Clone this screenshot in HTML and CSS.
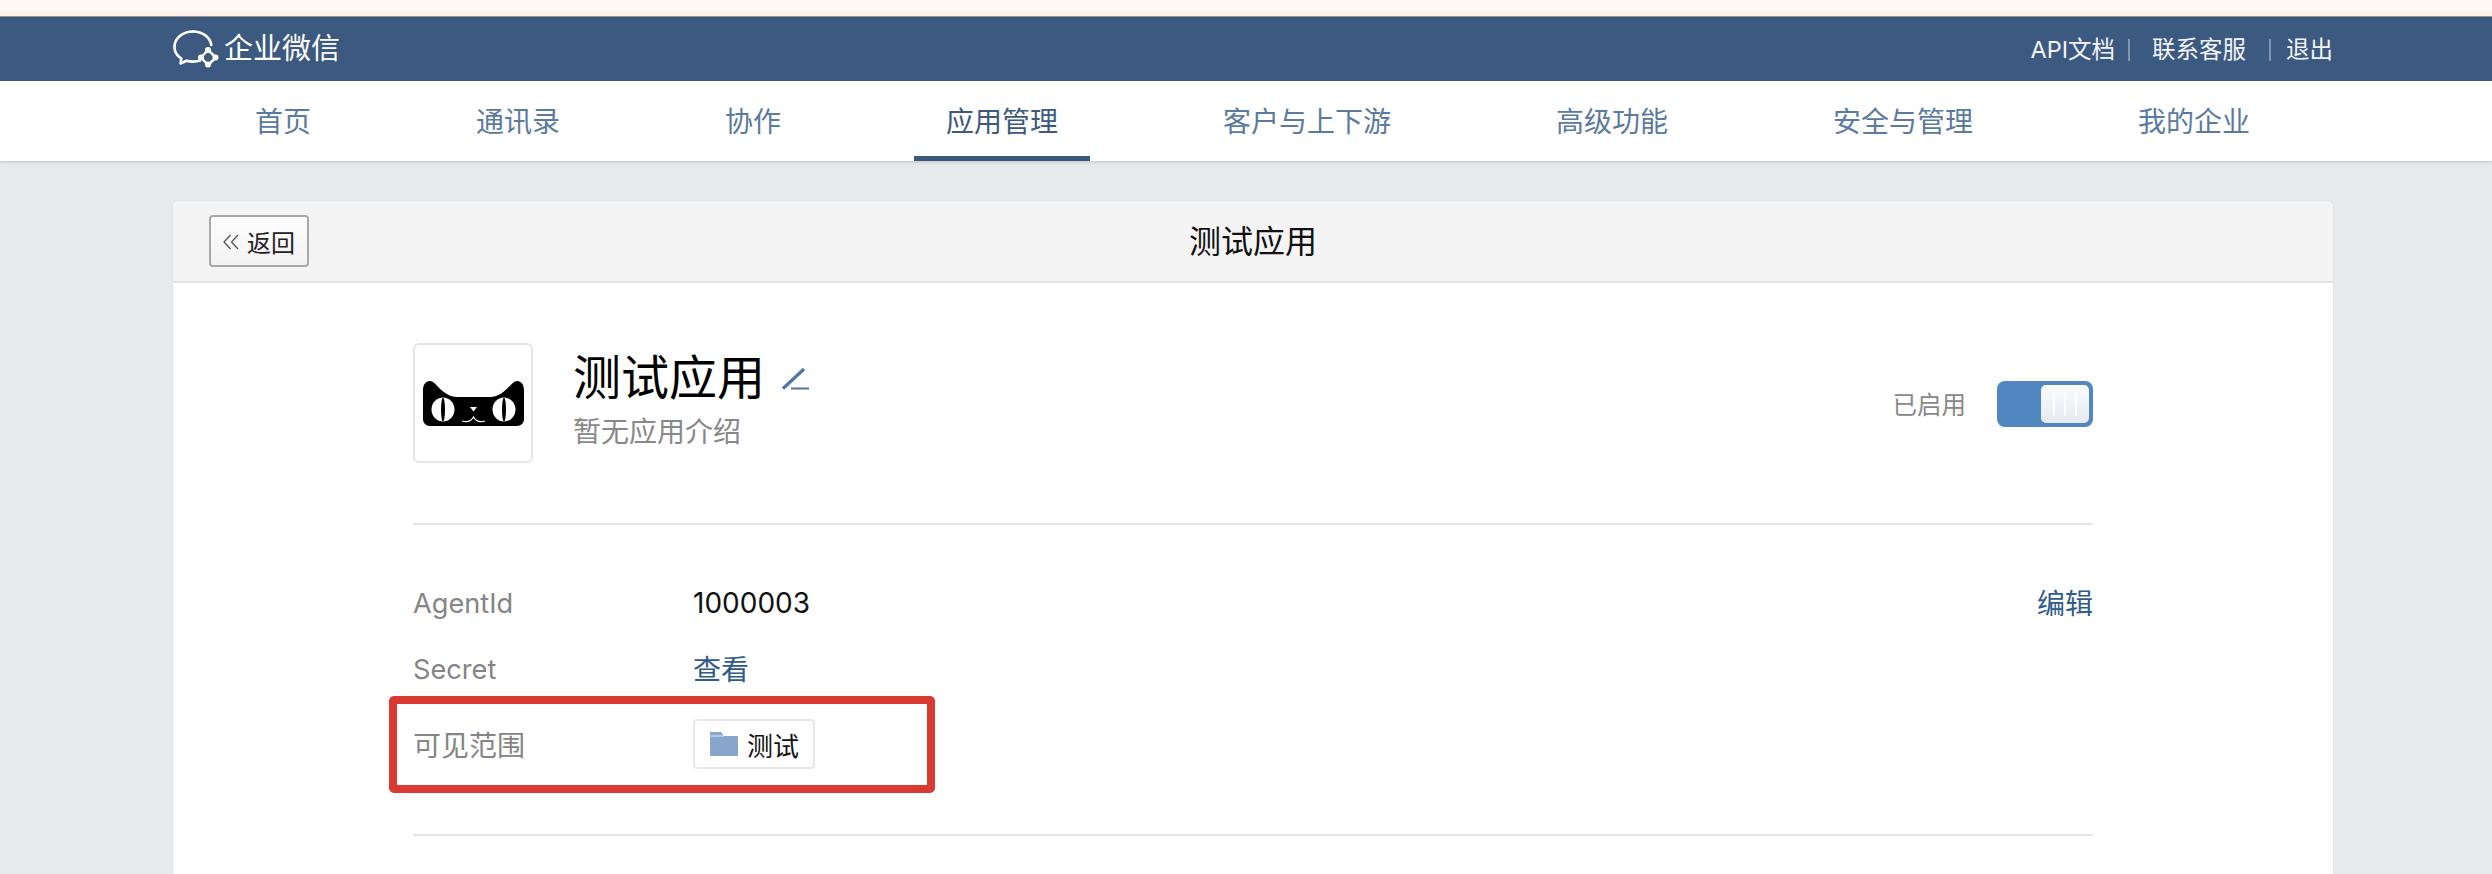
FILE: index.html
```html
<!DOCTYPE html>
<html lang="zh-CN">
<head>
<meta charset="utf-8">
<title>企业微信</title>
<link rel="stylesheet" href="styles.css">
</head>
<body>
<div class="top-strip"></div>
<header class="header">
  <div class="brand">
    <svg class="brand-icon" viewBox="0 0 46 38" fill="none">
      <path d="M20 1.500C9.500 1.500 1.500 8.500 1.500 17c0 4.800 2.600 8.800 6.800 11.500L7.500 33.500l6-2.700c2 .5 4.200.8 6.500.8 2.600 0 5-.3 7-1" stroke="#fff" stroke-width="2.600" stroke-linecap="round" stroke-linejoin="round"/>
      <path d="M20 1.500c9.500 0 17.300 5.800 18.300 13.500" stroke="#fff" stroke-width="2.600" stroke-linecap="round"/>
      <path d="M35 20l8 7.500-8 7.500-7-7.500z" stroke="#fff" stroke-width="2.400" stroke-linejoin="round"/>
      <circle cx="35" cy="20" r="3" fill="#fff"/>
      <circle cx="42.500" cy="27.500" r="3" fill="#fff"/>
      <circle cx="35" cy="34.500" r="3" fill="#fff"/>
      <circle cx="28" cy="27.500" r="3" fill="#fff"/>
    </svg>
    <span class="brand-name">企业微信</span>
  </div>
  <nav class="header-links">
    <a class="header-link">API文档</a>
    <i class="header-sep sep-first"></i>
    <a class="header-link">联系客服</a>
    <i class="header-sep sep-second"></i>
    <a class="header-link">退出</a>
  </nav>
</header>
<nav class="menu">
  <a class="menu-item">首页</a>
  <a class="menu-item">通讯录</a>
  <a class="menu-item">协作</a>
  <a class="menu-item active">应用管理</a>
  <a class="menu-item">客户与上下游</a>
  <a class="menu-item">高级功能</a>
  <a class="menu-item">安全与管理</a>
  <a class="menu-item">我的企业</a>
</nav>
<main class="main">
  <section class="card">
    <div class="card-head">
      <button class="back">
        <svg class="back-icon" viewBox="0 0 16 16" fill="none"><path d="M7.500 1L1 8l6.500 7M15 1L8.500 8l6.500 7" stroke="#555" stroke-width="1.300"/></svg>
        <span>返回</span>
      </button>
      <h2 class="card-title">测试应用</h2>
    </div>
    <div class="card-body">
      <div class="app">
        <div class="app-logo">
          <svg class="cat" viewBox="0 0 101 46">
            <path d="M0 10C0 3 5-1 10 2c7 6 13 15 24 15h33c11 0 17-9 24-15 5-3 10 1 10 8v29c0 4-3 7-7 7H7c-4 0-7-3-7-7z" fill="#000"/>
            <ellipse cx="20" cy="29.500" rx="11.500" ry="12" fill="#fff"/>
            <ellipse cx="81" cy="29.500" rx="11.500" ry="12" fill="#fff"/>
            <ellipse cx="20" cy="29.500" rx="2" ry="12" fill="#000"/>
            <ellipse cx="81" cy="29.500" rx="2" ry="12" fill="#000"/>
            <path d="M47 27h7l-3.500 4.500z" fill="#fff"/>
            <path d="M39 41c5 1.500 9 .5 11.500-4 2.500 4.500 6.500 5.500 11.500 4" fill="none" stroke="#fff" stroke-width="1.300"/>
          </svg>
        </div>
        <div class="app-info">
          <div class="app-name">
            <h1 class="app-title">测试应用</h1>
            <svg class="edit-icon" viewBox="0 0 28 24" fill="none">
              <path d="M1 21.500L22 2" stroke="#4f76a3" stroke-width="3.200"/>
              <path d="M9 21.500h18" stroke="#4f76a3" stroke-width="2"/>
            </svg>
          </div>
          <p class="app-desc">暂无应用介绍</p>
        </div>
        <div class="app-status">
          <span class="status-text">已启用</span>
          <div class="switch"><div class="knob"></div></div>
        </div>
      </div>
      <div class="details">
        <div class="row row-agent">
          <span class="row-label label-latin">AgentId</span>
          <span class="row-value">1000003</span>
          <a class="row-link row-edit">编辑</a>
        </div>
        <div class="row row-secret">
          <span class="row-label label-latin">Secret</span>
          <a class="row-link">查看</a>
        </div>
        <div class="row row-scope">
          <span class="row-label">可见范围</span>
          <span class="tag">
            <svg class="folder" viewBox="0 0 28 24"><path d="M0 0h11l3 4h14v20H0z" fill="#88a5cc"/><path d="M0 4h14" stroke="#fff" stroke-width=".8"/></svg>
            <span>测试</span>
          </span>
          <div class="highlight"></div>
        </div>
      </div>
    </div>
  </section>
</main>
</body>
</html>
```
FILE: styles.css
```css
* { box-sizing: border-box; }
html, body { margin: 0; padding: 0; height: 100%; overflow: hidden; }
body {
  background: #e8e9eb;
  font-family: Inter, "Noto Sans CJK SC", sans-serif;
  color: #000;
}
a { text-decoration: none; }
h1, h2, p { margin: 0; font-weight: 400; }

.top-strip {
  height: 17px;
  background: linear-gradient(#fffaf6 0, #fffaf6 12px, #fff1e8 12px, #fff1e8 16px, #9c8f8c 16px);
}

.header {
  height: 64px;
  background: #3c5980;
  display: flex;
  align-items: center;
  justify-content: space-between;
  padding: 0 159px 0 173px;
  color: #fff;
}
.brand { display: flex; align-items: center; gap: 5px; }
.brand-icon { width: 46px; height: 38px; }
.brand-name { font-size: 29px; line-height: 40px; }
.header-links { display: flex; align-items: center; padding-top: 2px; }
.header-link { font-size: 23.500px; line-height: 34px; color: #f1f4f8; }
.header-sep { width: 2px; height: 22px; background: #7f95b2; }
.sep-first { margin: 0 22px 0 13px; }
.sep-second { margin: 0 15px 0 23px; }

.menu {
  height: 80px;
  background: #fff;
  display: flex;
  gap: 101px;
  padding-left: 223px;
  box-shadow: 0 1px 3px rgba(0, 0, 0, .18);
  position: relative;
}
.menu-item {
  display: block;
  padding: 2px 32px 0;
  font-size: 28px;
  line-height: 78px;
  color: #5b7a9f;
}
.menu-item.active { color: #3c5980; box-shadow: inset 0 -5px 0 #3c5980; }

.main { padding: 40px 159px 0 173px; }
.card {
  background: #fff;
  border-radius: 6px 6px 0 0;
  height: 700px;
  box-shadow: 0 0 2px rgba(0, 0, 0, .08);
}
.card-head {
  position: relative;
  height: 82px;
  background: #f4f4f5;
  border-bottom: 2px solid #e2e3e8;
  border-radius: 6px 6px 0 0;
  display: flex;
  align-items: center;
  justify-content: center;
  padding-top: 2px;
}
.card-title { font-size: 32px; line-height: 44px; color: #111; }
.back {
  position: absolute;
  left: 36px;
  top: 14px;
  width: 100px;
  height: 52px;
  border: 2px solid #a8a8a8;
  border-radius: 4px;
  background: linear-gradient(#fdfdfd, #f2f2f2);
  display: flex;
  align-items: center;
  justify-content: center;
  gap: 8px;
  padding: 0;
  font: inherit;
  font-size: 24px;
  color: #222;
}
.back-icon { width: 16px; height: 16px; margin-top: 2px; }

.card-body { padding: 60px 240px 0 240px; }
.app {
  display: flex;
  align-items: flex-start;
  height: 182px;
  border-bottom: 2px solid #e4e4e6;
}
.app-logo {
  width: 120px;
  height: 120px;
  border: 2px solid #e5e5e5;
  border-radius: 6px;
  display: flex;
  align-items: center;
  justify-content: center;
  flex: none;
}
.cat { width: 101px; height: 46px; }
.app-info { margin-left: 40px; flex: 1; padding-top: 4px; }
.app-name { display: flex; align-items: center; gap: 17px; height: 62px; }
.app-title { font-size: 48px; line-height: 62px; color: #000; }
.edit-icon { width: 28px; height: 26px; margin-top: 2px; }
.app-desc { font-size: 28px; line-height: 38px; color: #888; margin-top: 4px; }
.app-status { display: flex; align-items: center; gap: 31px; margin-top: 38px; }
.status-text { font-size: 24.500px; line-height: 34px; color: #888; padding-top: 2px; }
.switch {
  width: 96px;
  height: 46px;
  background: #5087c1;
  border-radius: 8px;
  padding: 4px;
  display: flex;
  justify-content: flex-end;
}
.knob {
  width: 48px;
  height: 38px;
  border-radius: 5px;
  background-image:
    linear-gradient(rgba(255,255,255,.95), rgba(255,255,255,.95)),
    linear-gradient(rgba(255,255,255,.95), rgba(255,255,255,.95)),
    linear-gradient(rgba(255,255,255,.95), rgba(255,255,255,.95)),
    linear-gradient(#fafbfd, #e5e9f1);
  background-size: 2px 24px, 2px 24px, 2px 24px, 100% 100%;
  background-position: 12px 7px, 23px 7px, 34px 7px, 0 0;
  background-repeat: no-repeat;
}

.details {
  height: 311px;
  border-bottom: 2px solid #e4e4e6;
  padding-top: 58px;
}
.row { position: relative; display: flex; align-items: center; font-size: 28px; }
.row-agent { height: 40px; }
.row-secret { height: 40px; margin-top: 26px; }
.row-scope { height: 50px; margin-top: 30px; }
.row-label { width: 280px; color: #858585; flex: none; }
.label-latin { font-size: 27.200px; }
.row-value { color: #111; }
.row-link { color: #305a8c; margin-top: -2px; }
.row-edit { margin-left: auto; }
.tag {
  display: flex;
  align-items: center;
  gap: 9px;
  height: 50px;
  width: 122px;
  padding-left: 15px;
  border: 2px solid #e8e8e8;
  border-radius: 4px;
  font-size: 26px;
  color: #111;
}
.folder { width: 28px; height: 24px; }
.highlight {
  position: absolute;
  left: -24px;
  top: -23px;
  width: 546px;
  height: 97px;
  border: 8px solid #d93a32;
  border-radius: 5px;
  pointer-events: none;
}
```
